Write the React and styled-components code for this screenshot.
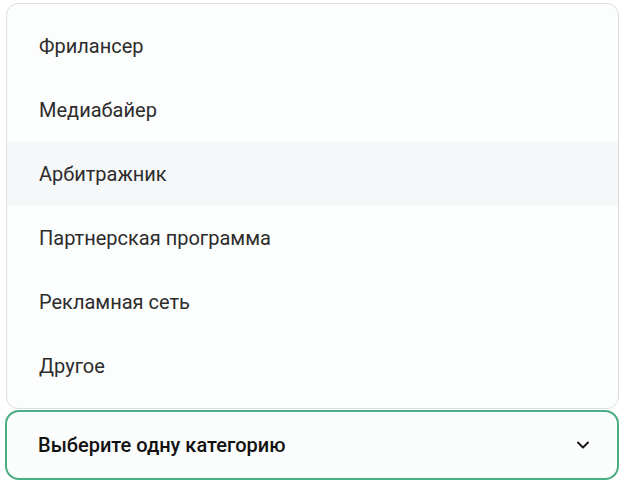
import React from "react";
import styled, { createGlobalStyle } from "styled-components";

const Global = createGlobalStyle`
  html, body { margin: 0; padding: 0; background: #ffffff; }
  body { font-family: Roboto, "Noto Sans", Arial, sans-serif; }
`;

const Page = styled.div`
  width: 614px;
  padding: 3px 0 0 5px;
  display: flex;
  flex-direction: column;
  gap: 1px;
`;

const Menu = styled.ul`
  list-style: none;
  margin: 0 0 0 1px;
  padding: 10px 0;
  border: 1px solid #dcdfe2;
  border-radius: 12px;
  background: #fcfdfd;
  display: flex;
  flex-direction: column;
  overflow: hidden;
`;

const Item = styled.li`
  height: 64px;
  display: flex;
  align-items: center;
  padding-left: 32px;
  font-size: 20px;
  color: #2c2c2c;
  background: ${(p) => (p.$active ? "#f6f7f9" : "transparent")};
`;

const Trigger = styled.button`
  height: 70px;
  box-sizing: border-box;
  border: 2px solid #4bad83;
  border-radius: 14px;
  background: #fbfcfc;
  display: flex;
  align-items: center;
  justify-content: space-between;
  padding: 0 27px 0 31px;
  font-family: Roboto, "Noto Sans", Arial, sans-serif;
  font-size: 20px;
  font-weight: 500;
  color: #111111;
  cursor: pointer;
`;

const Chevron = () => (
  <svg width="14" height="14" viewBox="0 0 14 14" fill="none">
    <path d="M2 4.5 L7 9.5 L12 4.5" stroke="#1a1a1a" strokeWidth="2" strokeLinecap="round" strokeLinejoin="round" />
  </svg>
);

const items = [
  "Фрилансер",
  "Медиабайер",
  "Арбитражник",
  "Партнерская программа",
  "Рекламная сеть",
  "Другое",
];

export default function App() {
  return (
    <>
      <Global />
      <Page>
        <Menu>
          {items.map((t, i) => (
            <Item key={t} $active={i === 2}>
              {t}
            </Item>
          ))}
        </Menu>
        <Trigger>
          <span>Выберите одну категорию</span>
          <Chevron />
        </Trigger>
      </Page>
    </>
  );
}
